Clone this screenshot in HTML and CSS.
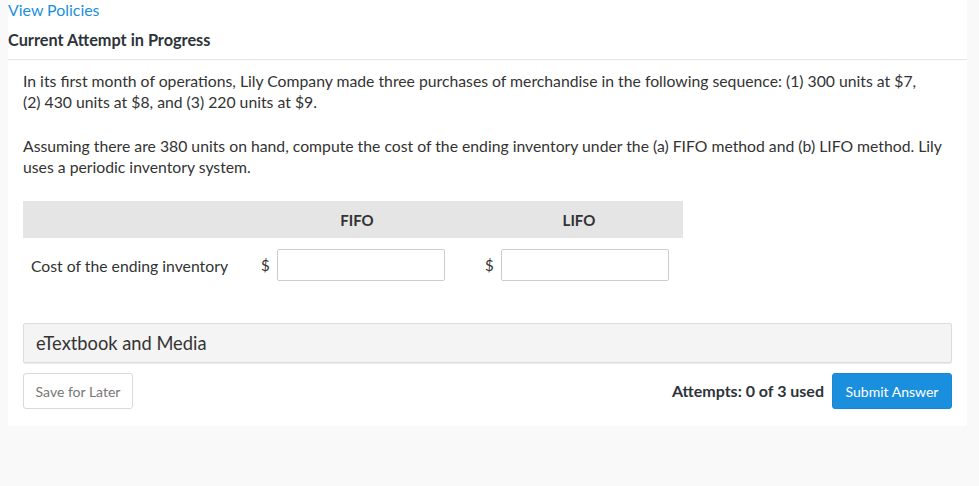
FILE: index.html
```html
<!DOCTYPE html>
<html>
<head>
<meta charset="utf-8">
<link rel="stylesheet" href="styles.css">
</head>
<body>
<div class="card">
  <a class="policies" href="#">View Policies</a>
  <div class="attempt-title">Current Attempt in Progress</div>
  <div class="content">
    <p class="para">In its first month of operations, Lily Company made three purchases of merchandise in the following sequence: (1) 300 units at $7, (2)&nbsp;430 units at $8, and (3) 220 units at $9.</p>
    <p class="para">Assuming there are 380 units on hand, compute the cost of the ending inventory under the (a) FIFO method and (b) LIFO method. Lily uses a periodic inventory system.</p>
    <div class="table">
      <div class="thead">
        <div class="th-label"></div>
        <div class="th">FIFO</div>
        <div class="th th-last">LIFO</div>
      </div>
      <div class="trow">
        <div class="row-label">Cost of the ending inventory</div>
        <div class="cell"><span class="dollar">$</span><input class="inp" type="text"></div>
        <div class="cell"><span class="dollar">$</span><input class="inp" type="text"></div>
      </div>
    </div>
    <div class="media">eTextbook and Media</div>
    <div class="actions">
      <button class="btn-save">Save for Later</button>
      <div class="right">
        <span class="attempts">Attempts: 0 of 3 used</span>
        <button class="btn-submit">Submit Answer</button>
      </div>
    </div>
  </div>
</div>
</body>
</html>
```
FILE: styles.css
```css
html, body {
  margin: 0;
  padding: 0;
  background: #f9f9f9;
  font-family: Lato, "Open Sans", sans-serif;
  color: #333;
}
.card {
  margin-left: 8px;
  width: 959px;
  height: 426px;
  background: #fff;
  box-sizing: border-box;
}
.policies {
  display: block;
  color: #1b8fdc;
  text-decoration: none;
  font-size: 15.9px;
  line-height: 20px;
}
.attempt-title {
  font-weight: bold;
  font-size: 16.3px;
  line-height: 20px;
  margin-top: 10px;
  padding-bottom: 9px;
  border-bottom: 1px solid #e5e5e5;
  color: #2d3338;
}
.content {
  padding: 0 15px;
}
.para {
  margin: 10px 0 23px;
  font-size: 15.75px;
  line-height: 21px;
  color: #333;
}
.table {
  width: 660px;
  margin-top: 24px;
}
.thead {
  display: grid;
  grid-template-columns: 222px 224px 214px;
  background: #e5e5e5;
  height: 37px;
  align-items: center;
}
.th {
  text-align: center;
  font-weight: bold;
  font-size: 15px;
  color: #333;
}
.th-last {
  padding-left: 6px;
}
.trow {
  display: grid;
  grid-template-columns: 222px 224px 214px;
  align-items: center;
  margin-top: 11px;
  height: 32px;
}
.row-label {
  padding-left: 8px;
  font-size: 15.75px;
}
.cell {
  display: flex;
  align-items: center;
  padding-left: 16px;
}
.dollar {
  font-size: 15px;
  width: 16px;
}
.inp {
  width: 168px;
  height: 32px;
  box-sizing: border-box;
  border: 1px solid #ccc;
  border-radius: 2px;
  margin: 0;
}
.media {
  margin-top: 42px;
  height: 40px;
  box-sizing: border-box;
  background: #f4f4f4;
  border: 1px solid #ddd;
  border-radius: 2px;
  box-shadow: 0 1px 1px rgba(0,0,0,0.08);
  padding-left: 12px;
  font-size: 18.3px;
  line-height: 38px;
  color: #333;
}
.actions {
  display: flex;
  justify-content: space-between;
  align-items: center;
  margin-top: 10px;
}
.btn-save {
  width: 110px;
  height: 36px;
  background: #fff;
  border: 1px solid #d9d9d9;
  border-radius: 3px;
  color: #777;
  font-family: Lato, sans-serif;
  font-size: 14px;
  padding: 0;
}
.right {
  display: flex;
  align-items: center;
  gap: 8px;
}
.attempts {
  font-weight: bold;
  font-size: 16px;
  color: #2d3338;
  margin-top: -2px;
}
.btn-submit {
  width: 120px;
  height: 36px;
  background: #1a8fdd;
  border: 1px solid #1886d0;
  border-radius: 3px;
  color: #fff;
  font-family: Lato, sans-serif;
  font-size: 14px;
  padding: 0;
}
```
